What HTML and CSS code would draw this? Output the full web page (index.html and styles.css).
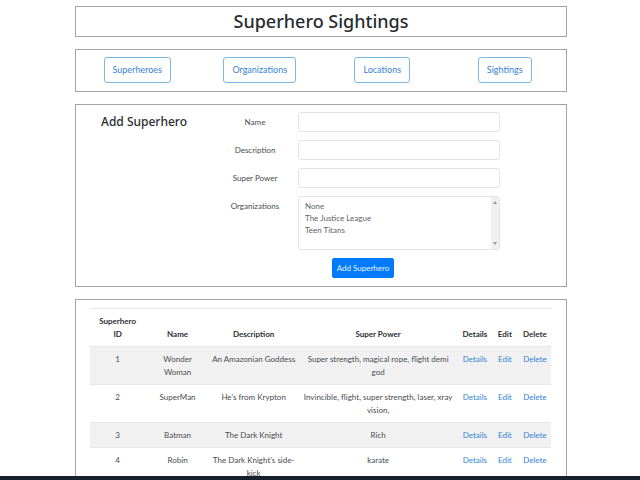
FILE: index.html
```html
<!DOCTYPE html>
<html lang="en">
<head>
<meta charset="utf-8">
<title>Superhero Sightings</title>
<link rel="stylesheet" href="styles.css">
</head>
<body>
<main class="page">
  <header class="panel title-panel"><h1>Superhero Sightings</h1></header>
  <nav class="panel nav-panel">
    <a class="nav-link" href="#superheroes">Superheroes</a>
    <a class="nav-link" href="#organizations">Organizations</a>
    <a class="nav-link" href="#locations">Locations</a>
    <a class="nav-link" href="#sightings">Sightings</a>
  </nav>
  <form class="panel form-panel">
    <h2>Add Superhero</h2>
    <label for="name">Name</label>
    <input class="field" id="name" type="text">
    <label for="description">Description</label>
    <input class="field" id="description" type="text">
    <label for="power">Super Power</label>
    <input class="field" id="power" type="text">
    <label for="organizations">Organizations</label>
    <div class="field list-field">
      <select id="organizations" multiple size="4">
        <option>None</option>
        <option>The Justice League</option>
        <option>Teen Titans</option>
      </select>
      <div class="scroll-track" aria-hidden="true">
        <svg viewBox="0 0 4 3"><path d="M0 3 2 0l2 3z"/></svg>
        <svg viewBox="0 0 4 3"><path d="M0 0h4L2 3z"/></svg>
      </div>
    </div>
    <div class="actions"><button type="button">Add Superhero</button></div>
  </form>
  <section class="panel table-panel">
    <table>
      <colgroup>
        <col class="col-id"><col class="col-name"><col class="col-description"><col class="col-power"><col class="col-details"><col class="col-edit"><col class="col-delete">
      </colgroup>
      <thead>
        <tr><th>Superhero ID</th><th>Name</th><th>Description</th><th>Super Power</th><th>Details</th><th>Edit</th><th>Delete</th></tr>
      </thead>
      <tbody>
        <tr><td>1</td><td>Wonder Woman</td><td>An Amazonian Goddess</td><td>Super strength, magical rope, flight demi god</td><td><a href="#d1">Details</a></td><td><a href="#e1">Edit</a></td><td><a href="#x1">Delete</a></td></tr>
        <tr><td>2</td><td>SuperMan</td><td>He's from Krypton</td><td>Invincible, flight, super strength, laser, xray vision,</td><td><a href="#d2">Details</a></td><td><a href="#e2">Edit</a></td><td><a href="#x2">Delete</a></td></tr>
        <tr><td>3</td><td>Batman</td><td>The Dark Knight</td><td>Rich</td><td><a href="#d3">Details</a></td><td><a href="#e3">Edit</a></td><td><a href="#x3">Delete</a></td></tr>
        <tr><td>4</td><td>Robin</td><td>The Dark Knight's side-kick</td><td>karate</td><td><a href="#d4">Details</a></td><td><a href="#e4">Edit</a></td><td><a href="#x4">Delete</a></td></tr>
      </tbody>
    </table>
  </section>
</main>
<footer class="taskbar"></footer>
</body>
</html>
```
FILE: styles.css
```css
* { box-sizing: border-box; }

body {
  display: flex;
  flex-direction: column;
  height: 100vh;
  margin: 0;
  overflow: hidden;
  background: #fff;
  color: #484c50;
  font: 8px/13px Lato, "Noto Sans", sans-serif;
  text-align: center;
}

.page {
  display: flex;
  flex: 1;
  flex-direction: column;
  gap: 12px;
  min-height: 0;
  overflow: hidden;
  padding: 6px 73px 0 75px;
}

.panel {
  flex: none;
  border: 1px solid #a4a4a4;
}

h1, h2 {
  margin: 0;
  color: #272c30;
  font-family: "Noto Sans", "Open Sans", sans-serif;
  font-weight: 500;
}

h1 { font-size: 18px; line-height: 28px; }
h2 { font-size: 12px; line-height: 20px; }

.title-panel { padding-bottom: 1px; }

a { color: #3583d6; text-decoration: none; }

.nav-panel {
  display: grid;
  grid-template-columns: repeat(4, 1fr);
  justify-items: center;
  padding: 7px 0 8px;
}

.nav-link {
  padding: 6px 8px;
  border: 1px solid #7cb9e2;
  border-radius: 3px;
  font-size: 9px;
  line-height: 12px;
}

.form-panel {
  display: grid;
  grid-template-columns: 136fr 86fr 202fr 66fr;
  row-gap: 8px;
  padding: 7px 0 8px;
}

.form-panel label { grid-column: 2; line-height: 20px; }

.field {
  grid-column: 3;
  width: 100%;
  height: 20px;
  padding: 0 6px;
  border: 1px solid #e2e5e8;
  border-radius: 3px;
  background: #fff;
  font: inherit;
}

.list-field {
  display: flex;
  height: 54px;
  padding: 0;
  overflow: hidden;
}

.list-field select {
  flex: 1;
  min-width: 0;
  height: 100%;
  padding: 4px;
  overflow: hidden;
  border: 0;
  outline: 0;
  background: none;
  color: #5c6268;
  font: inherit;
}

.list-field option { min-height: 12px; padding: 0 2px; line-height: 12px; }

.scroll-track {
  display: flex;
  flex-direction: column;
  justify-content: space-between;
  align-items: center;
  width: 8px;
  padding: 4px 0;
  background: #f0f0f0;
}

.scroll-track svg { width: 4px; height: 3px; fill: #999; }

.actions { grid-column: 3; padding-right: 72px; }

.actions button {
  display: block;
  height: 20px;
  margin: 0 auto;
  padding: 0 4px;
  border: 1px solid #007bff;
  border-radius: 2px;
  background: #007bff;
  color: #e6f2ff;
  font: inherit;
}

.table-panel { padding: 8px 15px 8px 14px; }

table {
  width: 100%;
  border-collapse: separate;
  border-spacing: 0;
  table-layout: fixed;
}

.col-id { width: 12%; }
.col-name { width: 14%; }
.col-description { width: 19%; }
.col-power { width: 35%; }
.col-details { width: 7%; }
.col-edit { width: 6%; }
.col-delete { width: 7%; }

th, td {
  padding: 6px 4px 5px;
  border-top: 1px solid #e4e6e8;
  vertical-align: top;
}

th { color: #2c3034; font-weight: 700; vertical-align: bottom; }
th:first-child { padding-right: 8px; padding-left: 8px; }
td:nth-child(n + 5), th:nth-child(n + 5) { padding-right: 0; padding-left: 0; }
td:nth-child(3) { padding-right: 0; padding-left: 0; }
td:nth-child(4) { padding-right: 5px; padding-left: 5px; }
tbody tr:nth-child(odd) { background: #f1f1f1; }

.taskbar { flex: none; height: 4px; background: #17212c; }
```
